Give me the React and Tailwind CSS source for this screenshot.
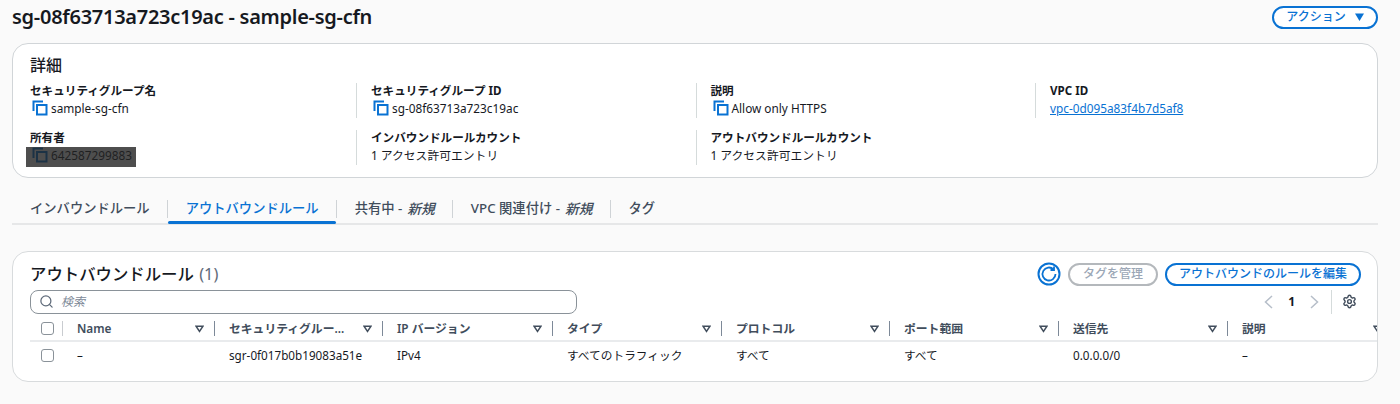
import { Search, Settings } from "lucide-react";

const FONT = "font-['Noto_Sans','Noto_Sans_CJK_JP',sans-serif]";

const CopyIcon = () => (
  <svg width="16" height="16" viewBox="0 0 16 16" fill="none" stroke="#0972d3" strokeWidth="2" className="shrink-0">
    <path d="M1.5 11V1.5H11" />
    <rect x="5" y="5" width="9.5" height="9.5" />
  </svg>
);

const FilterCaret = () => (
  <svg width="9" height="8" viewBox="0 0 9 8" fill="none" stroke="#414d5c" strokeWidth="1.5" className="shrink-0">
    <path d="M1 1.2h7L4.5 6.5z" />
  </svg>
);

const PageArrow = ({ d }) => (
  <svg width="9" height="14" viewBox="0 0 9 14" fill="none" stroke="#b6bec9" strokeWidth="1.5" className="shrink-0">
    <path d={d} />
  </svg>
);

const Field = ({ label, children }) => (
  <div className="h-[35px]">
    <div className="text-[11.6px] leading-[16px] font-bold text-[#16191f]">{label}</div>
    <div className="text-[11.8px] leading-[18px] text-[#16191f]">{children}</div>
  </div>
);

const Copyable = ({ children }) => (
  <div className="flex items-center gap-[3px] pl-[2px]">
    <CopyIcon />
    <span>{children}</span>
  </div>
);

const Column = ({ first, children }) => (
  <div className={first ? "w-[326px]" : "w-[339.5px] pl-[14px] border-l border-[#d5dbdb] h-fit"}>{children}</div>
);

const columns = [
  { name: "Name", cell: "–", w: "w-[152px]" },
  { name: "セキュリティグルー...", cell: "sgr-0f017b0b19083a51e", w: "w-[168px]" },
  { name: "IP バージョン", cell: "IPv4", w: "w-[170px]" },
  { name: "タイプ", cell: "すべてのトラフィック", w: "w-[169px]" },
  { name: "プロトコル", cell: "すべて", w: "w-[168px]" },
  { name: "ポート範囲", cell: "すべて", w: "w-[169px]" },
  { name: "送信先", cell: "0.0.0.0/0", w: "w-[169px]" },
  { name: "説明", cell: "–", w: "w-[169px]" },
];

const tabs = [
  { label: "インバウンドルール" },
  { label: "アウトバウンドルール", active: true },
  { label: "共有中 - ", em: "新規" },
  { label: "VPC 関連付け - ", em: "新規" },
  { label: "タグ" },
];

export default function App() {
  return (
    <div className={`${FONT} w-[1400px] h-[404px] overflow-hidden bg-[#fafafa] pl-[12px] pr-[22px] text-[#16191f]`}>
      <div className="flex items-center justify-between h-[43px] pb-[9px]">
        <h1 className="text-[20px] leading-[34px] font-semibold tracking-[-0.27px] text-[#16191f]">
          sg-08f63713a723c19ac - sample-sg-cfn
        </h1>
        <button className="flex items-center gap-[9px] h-[23px] w-[106px] justify-center rounded-full border-2 border-[#0972d3] text-[#0972d3] bg-white text-[12px] font-medium">
          アクション
          <svg width="9" height="8" viewBox="0 0 9 8" fill="#0972d3">
            <path d="M0 0.5h9L4.5 8z" />
          </svg>
        </button>
      </div>

      <section className="relative h-[135px] rounded-[16px] border border-[#d1d5d8] bg-white pl-[17px] pt-[10px]">
        <h2 className="text-[16px] leading-[22px] font-medium text-[#16191f]">詳細</h2>
        <div className="flex mt-[7px] h-[34px]">
          <Column first>
            <Field label="セキュリティグループ名"><Copyable>sample-sg-cfn</Copyable></Field>
          </Column>
          <Column>
            <Field label="セキュリティグループ ID"><Copyable>sg-08f63713a723c19ac</Copyable></Field>
          </Column>
          <Column>
            <Field label="説明"><Copyable>Allow only HTTPS</Copyable></Field>
          </Column>
          <Column>
            <Field label="VPC ID">
              <a className="text-[#0972d3] underline">vpc-0d095a83f4b7d5af8</a>
            </Field>
          </Column>
        </div>
        <div className="flex mt-[13px] h-[34px]">
          <Column first>
            <Field label="所有者"><Copyable>642587299883</Copyable></Field>
          </Column>
          <Column>
            <Field label="インバウンドルールカウント">1 アクセス許可エントリ</Field>
          </Column>
          <Column>
            <Field label="アウトバウンドルールカウント">1 アクセス許可エントリ</Field>
          </Column>
        </div>
        <div className="absolute left-[13px] top-[103px] w-[110px] h-[20px] bg-[#222]/80" />
      </section>

      <nav className="flex items-center h-[43px] mt-[4px] border-b-2 border-[#e6e7e8]">
        {tabs.map((tab, i) => (
          <div
            key={tab.label}
            className={`relative flex items-center h-[18px] mt-[13px] text-[13.3px] font-medium pl-[18px] pr-[17px] ${i === 0 ? "" : "border-l border-[#cfd3d6]"} ${tab.active ? "text-[#0972d3]" : "text-[#414d5c]"}`}
          >
            {tab.label}
            {tab.em && <em className="ml-[5px] text-[13.8px]">{tab.em}</em>}
            {tab.active && <span className="absolute left-0 right-0 top-[21px] h-[3px] rounded-sm bg-[#0972d3]" />}
          </div>
        ))}
      </nav>

      <section className="mt-[26px] h-[131px] rounded-[16px] border border-[#d8dbdd] bg-white overflow-hidden pl-[17px] pt-[10px]">
        <div className="flex items-center justify-between pr-[16px] h-[24px]">
          <h2 className="text-[16.4px] leading-[24px] font-medium text-[#16191f]">
            アウトバウンドルール <span className="font-normal text-[#5f6b7a] ml-[1px]">(1)</span>
          </h2>
          <div className="flex items-center gap-[7px]">
            <svg width="24" height="24" viewBox="0 0 24 24" fill="none" stroke="#0972d3" strokeWidth="2">
              <circle cx="12" cy="12" r="10.5" />
              <path d="M18.5 12a6.5 6.5 0 1 1-2-4.7" strokeWidth="1.8" />
              <path d="M17 4.5V8h-3.5" strokeWidth="1.8" />
            </svg>
            <button className="h-[23px] w-[90px] rounded-full border-2 border-[#b4b8bc] bg-white text-[#9ba7b6] text-[12px] font-medium">タグを管理</button>
            <button className="h-[23px] w-[196px] rounded-full border-2 border-[#0972d3] bg-white text-[#0972d3] text-[12px] font-medium">アウトバウンドのルールを編集</button>
          </div>
        </div>

        <div className="flex items-center justify-between h-[25px] mt-[3px] pr-[20px]">
          <div className="flex items-center w-[547px] h-[24px] rounded-[8px] border border-[#8a9299] bg-white pl-[8px] gap-[7px]">
            <Search size={15} color="#5f6b7a" strokeWidth={2} />
            <em className="text-[12px] text-[#7d8998]">検索</em>
          </div>
          <div className="flex items-center h-[24px]">
            <PageArrow d="M8 1 1.5 7 8 13" />
            <span className="mx-[15px] text-[12px] font-bold text-[#16191f]">1</span>
            <PageArrow d="M1 1l6.5 6L1 13" />
            <div className="w-px h-[24px] bg-[#d5dbdb] ml-[12px] mr-[10px]" />
            <Settings size={15} color="#414d5c" strokeWidth={2.25} />
          </div>
        </div>

        <div className="flex items-center h-[25px] mt-[3px] border-b-2 border-[#e9ebed] w-[1400px]">
          <div className="w-[33px] flex items-center shrink-0">
            <span className="ml-[11px] w-[13px] h-[13px] rounded-[3px] border border-[#8a9299] bg-white" />
            <span className="ml-[8px] w-px h-[15px] bg-[#c9ccd0]" />
          </div>
          {columns.map((col) => (
            <div key={col.name} className={`${col.w} shrink-0 flex items-center justify-between pl-[14px] pr-[10px] border-r border-[#7d8998] h-[15px] last:border-r-0 last:pr-[15px]`}>
              <span className="text-[11.8px] font-semibold text-[#414d5c] whitespace-nowrap">{col.name}</span>
              <FilterCaret />
            </div>
          ))}
        </div>

        <div className="flex items-center h-[27px]">
          <div className="w-[33px] shrink-0">
            <span className="block ml-[11px] w-[13px] h-[13px] rounded-[3px] border border-[#8a9299] bg-white" />
          </div>
          {columns.map((col) => (
            <div key={col.name} className={`${col.w} shrink-0 pl-[14px] text-[11.7px] text-[#16191f] whitespace-nowrap`}>{col.cell}</div>
          ))}
        </div>
      </section>
    </div>
  );
}
